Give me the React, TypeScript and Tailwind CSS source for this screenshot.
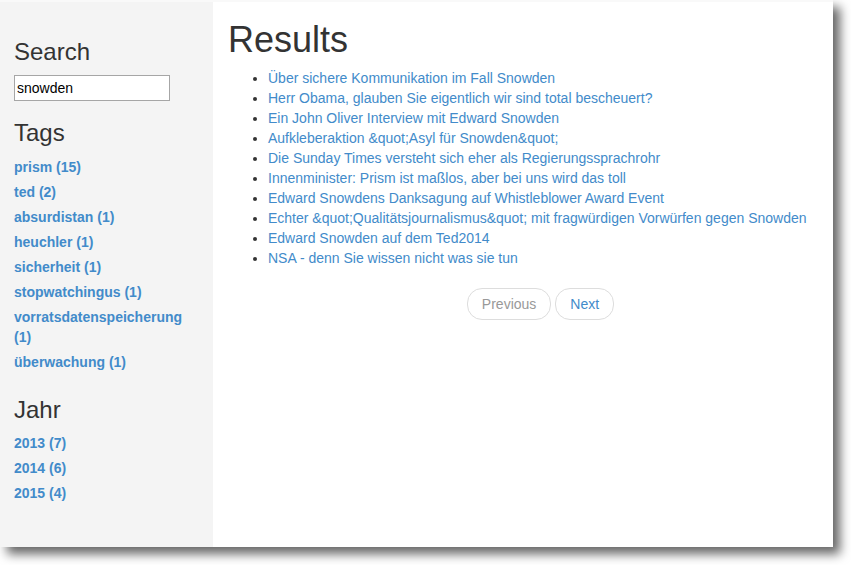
import React from "react";

const tags = [
  "prism (15)",
  "ted (2)",
  "absurdistan (1)",
  "heuchler (1)",
  "sicherheit (1)",
  "stopwatchingus (1)",
  "vorratsdatenspeicherung (1)",
  "überwachung (1)",
];

const years = ["2013 (7)", "2014 (6)", "2015 (4)"];

const results = [
  "Über sichere Kommunikation im Fall Snowden",
  "Herr Obama, glauben Sie eigentlich wir sind total bescheuert?",
  "Ein John Oliver Interview mit Edward Snowden",
  "Aufkleberaktion &quot;Asyl für Snowden&quot;",
  "Die Sunday Times versteht sich eher als Regierungssprachrohr",
  "Innenminister: Prism ist maßlos, aber bei uns wird das toll",
  "Edward Snowdens Danksagung auf Whistleblower Award Event",
  "Echter &quot;Qualitätsjournalismus&quot; mit fragwürdigen Vorwürfen gegen Snowden",
  "Edward Snowden auf dem Ted2014",
  "NSA - denn Sie wissen nicht was sie tun",
];

export default function App() {
  return (
    <div
      className="w-[851px] h-[565px] bg-white overflow-hidden"
      style={{ fontFamily: '"Liberation Sans", Arial, sans-serif' }}
    >
      <div className="w-[833px] h-[547px] flex flex-col bg-white shadow-[7px_7px_10px_rgba(0,0,0,0.6)]">
        <div className="h-[2px] bg-[#f9f9f9] shrink-0" />
        <div className="flex flex-1 min-h-0 overflow-hidden">
          {/* Sidebar */}
          <aside className="w-[213px] shrink-0 bg-[#f4f4f4] pl-[14px] pr-[15px] pt-[37px] text-[14px] leading-[20px]">
            <h3 className="text-[24px] leading-[1.1] text-[#333] font-normal mb-[10px]">Search</h3>
            <input
              className="block w-[156px] h-[26px] border border-[#a6a6a6] bg-white px-[2px] text-[14px] text-black outline-none"
              defaultValue="snowden"
              style={{ fontFamily: '"Liberation Sans", Arial, sans-serif' }}
            />
            <h3 className="text-[24px] leading-[1.1] text-[#333] font-normal mt-[19px] mb-[10px]">Tags</h3>
            <ul className="flex flex-col gap-[5px]">
              {tags.map((t) => (
                <li key={t}>
                  <a className="font-bold text-[#428bca]">{t}</a>
                </li>
              ))}
            </ul>
            <h3 className="text-[24px] leading-[1.1] text-[#333] font-normal mt-[25px] mb-[10px]">Jahr</h3>
            <ul className="flex flex-col gap-[5px]">
              {years.map((t) => (
                <li key={t}>
                  <a className="font-bold text-[#428bca]">{t}</a>
                </li>
              ))}
            </ul>
          </aside>

          {/* Main */}
          <main className="flex-1 min-w-0 pl-[15px] pt-[18px] text-[14px] leading-[20px] text-[#333]">
            <h1 className="text-[36px] leading-[1.1] font-normal text-[#333] mb-[8px]">Results</h1>
            <ul className="list-disc pl-[40px]">
              {results.map((r) => (
                <li key={r} className="whitespace-nowrap">
                  <a className="text-[#428bca]">{r}</a>
                </li>
              ))}
            </ul>
            <div className="w-[625px] flex justify-center gap-[4px] mt-[20px]">
              <span className="inline-block px-[14px] py-[5px] border border-[#dddddd] rounded-[15px] bg-white text-[#999]">
                Previous
              </span>
              <span className="inline-block px-[14px] py-[5px] border border-[#dddddd] rounded-[15px] bg-white text-[#428bca]">
                Next
              </span>
            </div>
          </main>
        </div>
      </div>
    </div>
  );
}
